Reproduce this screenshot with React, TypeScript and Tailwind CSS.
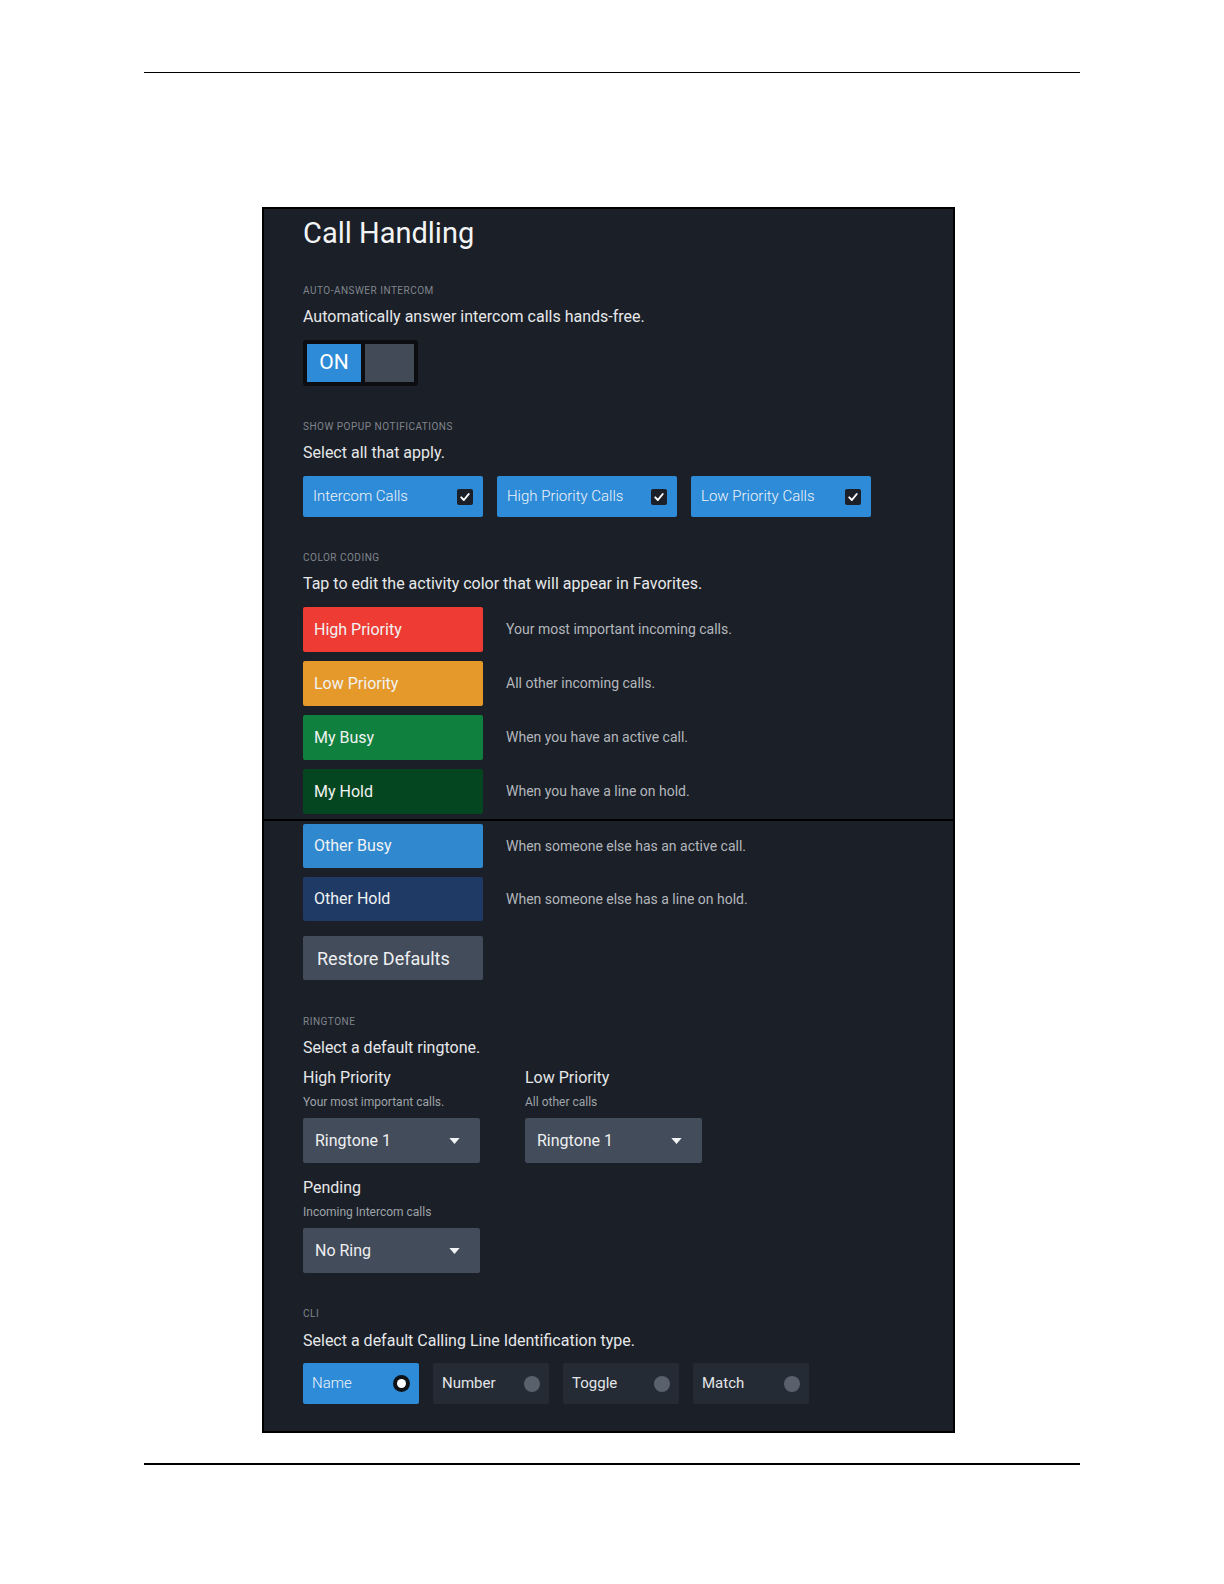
import React from 'react';

const font = { fontFamily: 'Roboto, "Liberation Sans", sans-serif' };

function Label({ children, className = '' }: { children: React.ReactNode; className?: string }) {
  return <div className={`text-[10px] leading-[14px] tracking-[0.5px] text-[#80858d] uppercase ${className}`}>{children}</div>;
}

function Lead({ children, className = '' }: { children: React.ReactNode; className?: string }) {
  return <div className={`text-[16px] leading-[22px] text-[#e6e8ea] ${className}`}>{children}</div>;
}

function Check() {
  return (
    <span className="flex h-[16px] w-[16px] items-center justify-center rounded-[2px] bg-[#1b1f27]">
      <svg viewBox="0 0 16 16" className="h-[12px] w-[12px]">
        <path d="M3 8.5 L6.5 12 L13 4" fill="none" stroke="#fff" strokeWidth="2.6" strokeLinecap="round" strokeLinejoin="round" />
      </svg>
    </span>
  );
}

function Caret() {
  return (
    <svg viewBox="0 0 12 7" className="h-[6px] w-[11px]">
      <path d="M0 0 H12 L6 7 Z" fill="#f2f3f5" />
    </svg>
  );
}

function Dropdown({ value }: { value: string }) {
  return (
    <div className="mt-[8px] flex h-[45px] w-[177px] items-center justify-between rounded-[2px] bg-[#434c5a] pl-[12px] pr-[20px] text-[16px] text-[#eef0f2]">
      <span>{value}</span>
      <Caret />
    </div>
  );
}

const colors = [
  { name: 'High Priority', bg: 'bg-[#ee3b33]', desc: 'Your most important incoming calls.' },
  { name: 'Low Priority', bg: 'bg-[#e5992b]', desc: 'All other incoming calls.' },
  { name: 'My Busy', bg: 'bg-[#10803e]', desc: 'When you have an active call.' },
  { name: 'My Hold', bg: 'bg-[#04461f]', desc: 'When you have a line on hold.' },
];

const colors2 = [
  { name: 'Other Busy', bg: 'bg-[#3089cf]', desc: 'When someone else has an active call.' },
  { name: 'Other Hold', bg: 'bg-[#1e3a65]', desc: 'When someone else has a line on hold.' },
];

function ColorRow({ name, bg, desc, tall }: { name: string; bg: string; desc: string; tall?: boolean }) {
  return (
    <div className="flex items-center">
      <div className={`flex w-[180px] items-center rounded-[2px] pl-[11px] text-[16px] text-[#f1f2f3] ${tall ? 'h-[45px]' : 'h-[44px]'} ${bg}`}>{name}</div>
      <div className="ml-[23px] text-[14px] text-[#b3b7bd]">{desc}</div>
    </div>
  );
}

export default function App() {
  const cli = ['Name', 'Number', 'Toggle', 'Match'];
  return (
    <div className="min-h-[1584px] w-[1224px] bg-white pt-[72px]" style={font}>
      <div className="ml-[144px] h-px w-[936px] bg-black" />

      <div className="ml-[262px] mt-[134px] w-[693px] border-2 border-black bg-[#1b1f27]">
        {/* top half */}
        <div className="pl-[39px] pt-[6px] pb-[5px]">
          <div className="text-[29px] leading-[36px] text-[#f3f4f5]">Call Handling</div>

          <Label className="mt-[33px]">Auto-Answer Intercom</Label>
          <Lead className="mt-[8px]">Automatically answer intercom calls hands-free.</Lead>
          <div className="mt-[12px] flex h-[46px] w-[115px] gap-[4px] rounded-[3px] bg-[#0b0d11] p-[4px]">
            <div className="flex w-[54px] items-center justify-center bg-[#2e8bd7] text-[21px] text-white">ON</div>
            <div className="flex-1 bg-[#424a57]" />
          </div>

          <Label className="mt-[34px]">Show Popup Notifications</Label>
          <Lead className="mt-[8px]">Select all that apply.</Lead>
          <div className="mt-[12px] flex gap-[14px]">
            {['Intercom Calls', 'High Priority Calls', 'Low Priority Calls'].map((t) => (
              <div key={t} className="flex h-[41px] w-[180px] items-center justify-between rounded-[2px] bg-[#2e8bd7] pl-[10px] pr-[10px] text-[15px] font-light text-[#eef4fa]">
                <span>{t}</span>
                <Check />
              </div>
            ))}
          </div>

          <Label className="mt-[34px]">Color Coding</Label>
          <Lead className="mt-[8px]">Tap to edit the activity color that will appear in Favorites.</Lead>
          <div className="mt-[12px] flex flex-col gap-[9px]">
            {colors.map((c) => (
              <ColorRow key={c.name} {...c} tall />
            ))}
          </div>
        </div>

        {/* bottom half */}
        <div className="border-t-2 border-black pl-[39px] pt-[3px] pb-[27px]">
          <div className="flex flex-col gap-[9px]">
            {colors2.map((c) => (
              <ColorRow key={c.name} {...c} />
            ))}
          </div>
          <div className="mt-[15px] flex h-[44px] w-[180px] items-center rounded-[2px] bg-[#434c5a] pl-[14px] text-[18px] text-[#eef0f2]">
            Restore Defaults
          </div>

          <Label className="mt-[35px]">Ringtone</Label>
          <Lead className="mt-[8px]">Select a default ringtone.</Lead>
          <div className="mt-[8px] flex">
            <div className="w-[222px]">
              <Lead>High Priority</Lead>
              <div className="mt-[5px] text-[12px] leading-[16px] text-[#9ea3aa]">Your most important calls.</div>
              <Dropdown value="Ringtone 1" />
            </div>
            <div>
              <Lead>Low Priority</Lead>
              <div className="mt-[5px] text-[12px] leading-[16px] text-[#9ea3aa]">All other calls</div>
              <Dropdown value="Ringtone 1" />
            </div>
          </div>
          <Lead className="mt-[14px]">Pending</Lead>
          <div className="mt-[5px] text-[12px] leading-[16px] text-[#9ea3aa]">Incoming Intercom calls</div>
          <Dropdown value="No Ring" />

          <Label className="mt-[34px]">CLI</Label>
          <Lead className="mt-[9px]">Select a default Calling Line Identification type.</Lead>
          <div className="mt-[11px] flex gap-[14px]">
            {cli.map((t, i) => (
              <div
                key={t}
                className={`flex h-[41px] w-[116px] items-center justify-between rounded-[2px] pl-[9px] pr-[9px] text-[15px] ${
                  i === 0 ? 'bg-[#2e8bd7] font-light text-[#eef4fa]' : 'bg-[#252b35] text-[#e3e5e8]'
                }`}
              >
                <span>{t}</span>
                {i === 0 ? (
                  <span className="flex h-[17px] w-[17px] items-center justify-center rounded-full bg-[#0f1217]">
                    <span className="h-[9px] w-[9px] rounded-full bg-white" />
                  </span>
                ) : (
                  <span className="h-[16px] w-[16px] rounded-full bg-[#59616d]" />
                )}
              </div>
            ))}
          </div>
        </div>
      </div>

      <div className="ml-[144px] mt-[30px] h-[2px] w-[936px] bg-black" />
    </div>
  );
}
